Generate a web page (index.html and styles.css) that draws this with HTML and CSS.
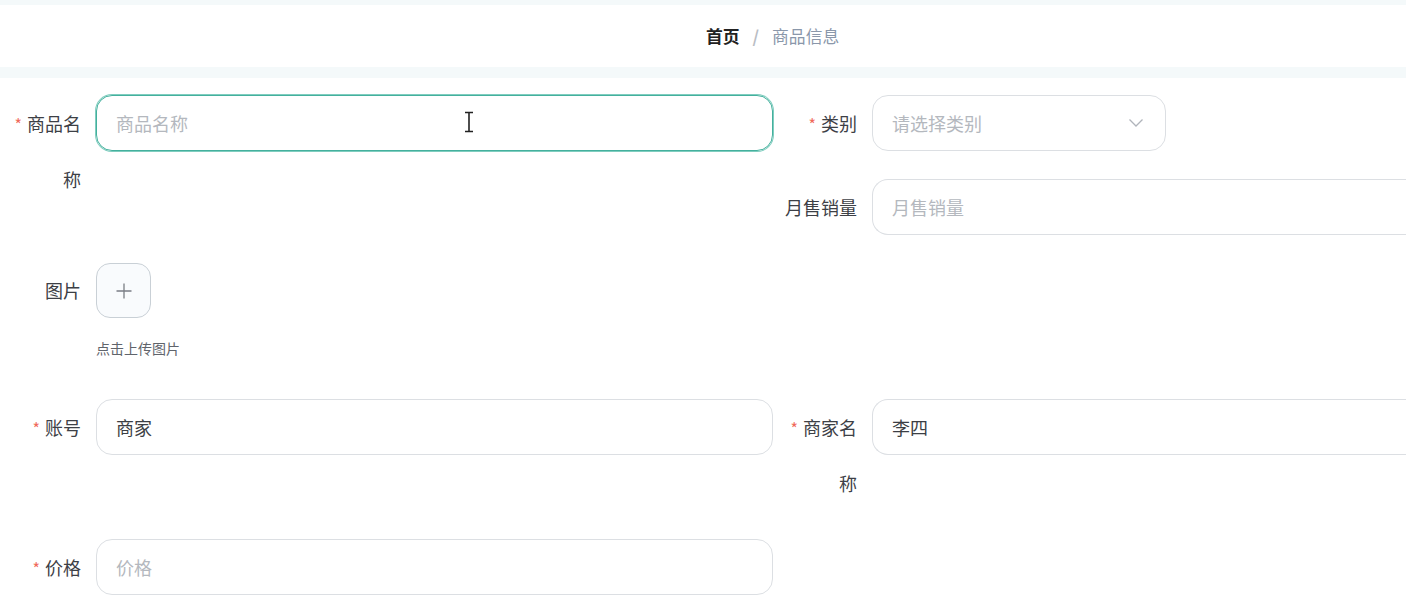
FILE: index.html
```html
<!DOCTYPE html>
<html lang="zh-CN">
<head>
<meta charset="utf-8">
<title>商品信息</title>
<link rel="stylesheet" href="styles.css">
</head>
<body>
<div class="topstrip"></div>
<header class="header">
  <nav class="crumbs">
    <span class="crumb-home">首页</span>
    <span class="crumb-sep">/</span>
    <span class="crumb-cur">商品信息</span>
  </nav>
</header>
<div class="midstrip"></div>
<main class="main">
  <form class="form">
    <div class="row">
      <div class="col col-left">
        <div class="item">
          <label class="label"><span class="req">*</span>商品名称</label>
          <div class="control">
            <div class="input focused"><span class="ph">商品名称</span>
              <svg class="cursor" width="12" height="22" viewBox="0 0 12 22"><path d="M2 1.5h3M7 1.5h3M6 2v18M2 20.5h3M7 20.5h3" stroke="#222" stroke-width="1.6" fill="none"/><path d="M5 1.5h2M5 20.5h2" stroke="#222" stroke-width="1.6"/></svg>
            </div>
          </div>
        </div>
      </div>
      <div class="col col-right">
        <div class="item">
          <label class="label"><span class="req">*</span>类别</label>
          <div class="control">
            <div class="input select"><span class="ph">请选择类别</span>
              <svg class="arrow" width="16" height="10" viewBox="0 0 16 10"><path d="M1.5 1.5l6.5 6.5 6.5-6.5" stroke="#b0b4bb" stroke-width="1.3" fill="none"/></svg>
            </div>
          </div>
        </div>
        <div class="item">
          <label class="label">月售销量</label>
          <div class="control">
            <div class="input wide"><span class="ph">月售销量</span></div>
          </div>
        </div>
      </div>
    </div>
    <div class="row">
      <div class="col col-left">
        <div class="item item-upload">
          <label class="label">图片</label>
          <div class="control">
            <div class="upload">
              <svg width="18" height="18" viewBox="0 0 18 18"><path d="M9 1.5v15M1.5 9h15" stroke="#7a7e85" stroke-width="1.3"/></svg>
            </div>
            <div class="tip">点击上传图片</div>
          </div>
        </div>
      </div>
    </div>
    <div class="row">
      <div class="col col-left">
        <div class="item">
          <label class="label"><span class="req">*</span>账号</label>
          <div class="control">
            <div class="input"><span class="val">商家</span></div>
          </div>
        </div>
      </div>
      <div class="col col-right">
        <div class="item">
          <label class="label"><span class="req">*</span>商家名称</label>
          <div class="control">
            <div class="input wide"><span class="val">李四</span></div>
          </div>
        </div>
      </div>
    </div>
    <div class="row">
      <div class="col col-left">
        <div class="item">
          <label class="label"><span class="req">*</span>价格</label>
          <div class="control">
            <div class="input"><span class="ph">价格</span></div>
          </div>
        </div>
      </div>
    </div>
  </form>
</main>
</body>
</html>
```

FILE: styles.css
```css
* { box-sizing: border-box; }
html, body {
  margin: 0;
  padding: 0;
  background: #fff;
  overflow: hidden;
  width: 1406px;
  height: 602px;
  font-family: "Noto Sans CJK SC", "Liberation Sans", sans-serif;
  color: #4a4d52;
}
.topstrip { height: 5px; background: #f4f9fa; }
.header {
  height: 62px;
  background: #fff;
  display: flex;
  align-items: center;
  padding-left: 706px;
}
.crumbs { display: flex; align-items: center; font-size: 16.8px; }
.crumb-home { color: #222; font-weight: 700; }
.crumb-sep { color: #b9bdc4; margin: 0 13px; font-weight: 700; }
.crumb-cur { color: #8a97aa; }
.midstrip { height: 11px; background: #f4f9fa; }
.main { padding-top: 17px; }
.form { display: flex; flex-direction: column; }
.row { display: flex; }
.col-left { width: 776px; flex: none; }
.col-right { flex: none; width: 630px; }
.item { display: flex; margin-bottom: 28px; }
.label {
  width: 96px;
  flex: none;
  padding-right: 15px;
  padding-left: 8px;
  text-align: right;
  font-size: 18px;
  line-height: 56px;
  color: #3d4046;
}
.req { color: #f06a5a; margin-right: 5px; font-size: 16px; line-height: 0; }
.control { flex: none; }
.input {
  position: relative;
  width: 677px;
  height: 56px;
  border: 1px solid #dcdfe3;
  border-radius: 16px;
  padding: 0 19px;
  display: flex;
  align-items: center;
  font-size: 18px;
}
.input.focused {
  border-color: #44b09d;
  box-shadow: 0 0 0 1px #7fcdbf;
}
.input.select { width: 294px; justify-content: space-between; }
.input.wide { width: 560px; border-right: none; border-top-right-radius: 0; border-bottom-right-radius: 0; }
.ph { color: #b4b8be; }
.val { color: #3b3e44; }
.arrow { margin-right: 2px; }
.cursor { position: absolute; left: 366px; top: 15px; }
.item-upload .label { line-height: 55px; }
.upload {
  width: 55px;
  height: 55px;
  border: 1px solid #c9d0d6;
  border-radius: 14px;
  background: #f9fbfd;
  display: flex;
  align-items: center;
  justify-content: center;
}
.tip {
  margin-top: 19px;
  line-height: 22px;
  font-size: 14px;
  color: #60646b;
  height: 34px;
}
```
